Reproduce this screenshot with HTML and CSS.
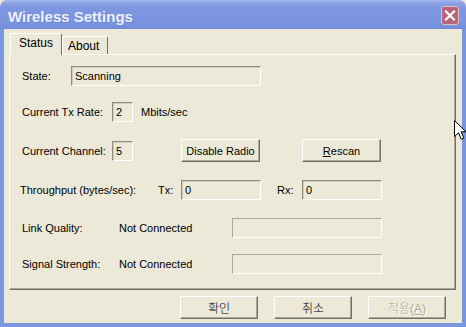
FILE: index.html
```html
<!DOCTYPE html>
<html>
<head>
<title>Wireless Settings</title>
<link rel="stylesheet" href="styles.css">
</head>
<body>
<div class="window">
<div class="titlebar">
<span class="title">Wireless Settings</span>
<span class="close">
<svg width="18" height="19" viewBox="0 0 18 19"><path d="M5 5.5 L13 13.5 M13 5.5 L5 13.5" stroke="#fff" stroke-width="2.2" stroke-linecap="square"/></svg>
</span>
</div>
<div class="frame">
<div class="tabs">
<span class="tab active">Status</span>
<span class="tab">About</span>
</div>
<div class="panel">
<div class="row">
<span class="lbl state-lbl">State:</span>
<span class="field state">Scanning</span>
</div>
<div class="row">
<span class="lbl wide">Current Tx Rate:</span>
<span class="field small">2</span>
<span class="unit">Mbits/sec</span>
</div>
<div class="row tall">
<span class="lbl wide">Current Channel:</span>
<span class="field small">5</span>
<button class="btn radio">Disable Radio</button>
<button class="btn rescan"><u>R</u>escan</button>
</div>
<div class="row">
<span class="lbl through">Throughput (bytes/sec):</span>
<span class="tx">Tx:</span>
<span class="field mid">0</span>
<span class="rx">Rx:</span>
<span class="field mid">0</span>
</div>
<div class="row">
<span class="lbl quality">Link Quality:</span>
<span class="status">Not Connected</span>
<span class="field off"></span>
</div>
<div class="row">
<span class="lbl quality">Signal Strength:</span>
<span class="status">Not Connected</span>
<span class="field off"></span>
</div>
</div>
<div class="footer">
<button class="btn">확인</button>
<button class="btn">취소</button>
<button class="btn disabled">적용(<u>A</u>)</button>
</div>
</div>
<svg class="cursor" width="13" height="21" viewBox="0 0 13 21"><path d="M0.5 0.5 L0.5 16.5 L4.5 12.8 L7.2 19.2 L9.8 18.1 L7.2 11.8 L12 11.8 Z" fill="#fff" stroke="#000" stroke-width="1" stroke-linejoin="miter"/></svg>
</div>
</body>
</html>
```

FILE: styles.css
```css
*{
margin: 0;
padding: 0;
box-sizing: border-box;
}
body{
font-family: "Liberation Sans", "Noto Sans CJK KR", sans-serif;
font-size: 11px;
color: #000;
background: #ece9d8;
}
.window{
width: 466px;
height: 327px;
position: relative;
overflow: hidden;
display: flex;
flex-direction: column;
}
.titlebar{
height: 29px;
flex: none;
display: flex;
align-items: center;
justify-content: space-between;
border-radius: 7px 7px 0 0;
background: linear-gradient(#a5b8ee 0, #8ba3e5 3px, #7c97df 8px, #7a95de 24px, #6f8ad9 29px);
}
.title{
padding-left: 8px;
padding-top: 3px;
font-size: 15px;
font-weight: bold;
color: #eef1fb;
text-shadow: 1px 1px 0 #6a84d0;
}
.close{
width: 18px;
height: 19px;
margin-right: 7px;
margin-top: 2px;
border: 1px solid #dcc0c8;
border-radius: 3px;
background: #b86676;
display: flex;
}
.close svg{
margin: -1px;
}
.frame{
flex: 1;
border: 4px solid #7a96df;
border-top: 0;
padding: 4px 6px 0 5px;
display: flex;
flex-direction: column;
}
.tabs{
height: 21px;
display: flex;
align-items: flex-end;
padding-left: 1px;
font-size: 12px;
}
.tab{
height: 18px;
width: 46px;
border: 1px solid #fff;
border-right-color: #716f64;
border-bottom: 0;
border-radius: 2px 2px 0 0;
padding: 2px 0 0 5px;
}
.tab.active{
height: 22px;
width: 52px;
margin-bottom: -1px;
padding: 2px 0 0 8px;
background: #ece9d8;
position: relative;
z-index: 1;
}
.panel{
height: 236px;
border: 1px solid #fff;
border-right-color: #716f64;
border-bottom-color: #716f64;
box-shadow: inset -1px -1px 0 #aca899;
padding: 10px 0 0 12px;
}
.row{
height: 22px;
display: flex;
align-items: center;
}
.row:nth-child(2){ margin-top: 14px; }
.row:nth-child(3){ margin-top: 16px; height: 23px; }
.row:nth-child(4){ margin-top: 17px; }
.row:nth-child(5){ margin-top: 16px; }
.row:nth-child(6){ margin-top: 14px; }
.lbl{
flex: none;
}
.state-lbl{ width: 49px; }
.wide{ width: 90px; }
.through{ width: 138px; margin-left: -2px; }
.quality{ width: 97px; }
.field{
height: 20px;
flex: none;
border: 1px solid #fff;
border-top-color: #8f8d82;
border-left-color: #8f8d82;
box-shadow: inset 1px 1px 0 #cfccbd;
padding: 3px 0 0 3px;
}
.state{ width: 190px; }
.small{ width: 21px; }
.mid{ width: 80px; }
.field.off{
width: 150px;
border-top-color: #aca899;
border-left-color: #aca899;
box-shadow: none;
}
.unit{ margin-left: 8px; }
.tx{ width: 23px; }
.rx{ width: 25px; margin-left: 16px; }
.status{ width: 113px; }
.btn{
flex: none;
height: 23px;
width: 79px;
font: inherit;
font-size: 11px;
color: #000;
background: #ece9d8;
border: 1px solid #fff;
border-right-color: #716f64;
border-bottom-color: #716f64;
box-shadow: inset -1px -1px 0 #aca899;
}
.radio{ margin-left: 48px; }
.rescan{ margin-left: 42px; }
.footer{
margin-top: 6px;
display: flex;
justify-content: flex-end;
gap: 16px;
padding-right: 10px;
}
.footer .btn{
width: 78px;
font-size: 12px;
font-weight: 300;
}
.btn.disabled{
color: #aca899;
text-shadow: 1px 1px 0 #fff;
}
.cursor{
position: absolute;
left: 454px;
top: 120px;
}
```
